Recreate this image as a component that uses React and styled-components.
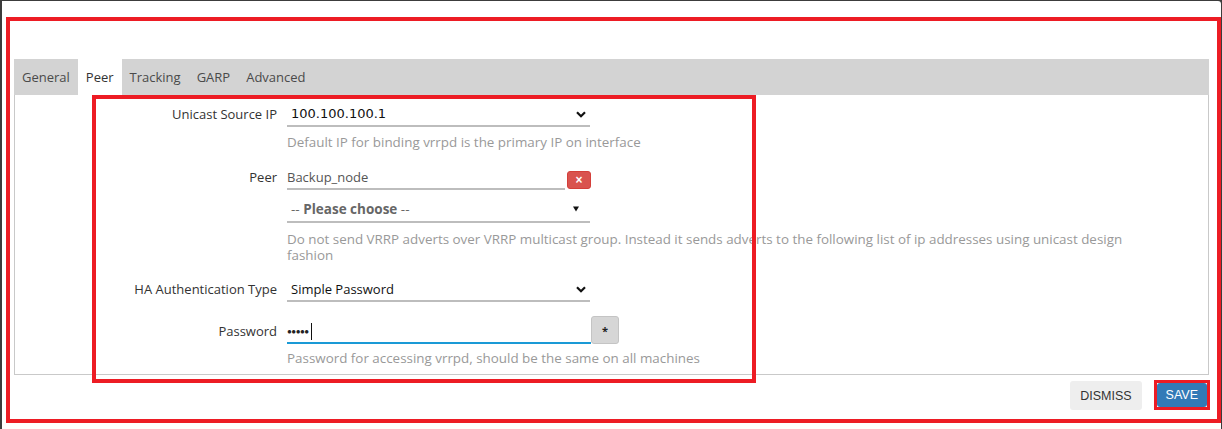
import React from "react";
import styled, { createGlobalStyle } from "styled-components";

const GlobalStyle = createGlobalStyle`
  html, body {
    margin: 0;
    padding: 0;
    background: #3c3c3c;
    overflow: hidden;
  }
  body {
    font-family: "Open Sans", "Noto Sans", sans-serif;
  }
`;

const Modal = styled.div`
  width: 1219px;
  height: 440px;
  margin: 1px 0 0 2px;
  background: #fff;
  border-radius: 0 3px 0 0;
  padding-top: 16px;
  box-sizing: border-box;
`;

/* red annotation frame around the whole dialog body */
const Frame = styled.div`
  width: 1215px;
  height: 406px;
  margin-left: 4px;
  border: 4px solid #ed1c24;
  box-sizing: border-box;
  padding: 38px 8px 0 4px;
  display: flex;
  flex-direction: column;
`;

const Panel = styled.div`
  position: relative;
  display: flex;
  flex-direction: column;
`;

const TabBar = styled.div`
  display: flex;
  height: 36px;
  background: #d3d3d3;
`;

const Tab = styled.div`
  padding: 0 8px;
  line-height: 36px;
  font-size: 13px;
  color: ${(p) => (p.$active ? "#333" : "#4a4a4a")};
  background: ${(p) => (p.$active ? "#fff" : "transparent")};
`;

const Body = styled.div`
  border: 1px solid #c9c9c9;
  border-top: none;
  padding: 4px 0 8px;
`;

const Row = styled.div`
  display: grid;
  grid-template-columns: 262px 1fr;
  column-gap: 10px;
  margin-top: ${(p) => p.$mt || 0}px;
`;

const Label = styled.div`
  text-align: right;
  font-size: 13px;
  color: #333;
  padding-top: ${(p) => p.$pt ?? 4}px;
  line-height: 22px;
  white-space: nowrap;
`;

const Field = styled.div`
  grid-column: 2;
  display: flex;
  flex-direction: column;
`;

const Line = styled.div`
  display: flex;
  align-items: flex-start;
  gap: ${(p) => p.$gap ?? 0}px;
  margin-top: ${(p) => p.$mt || 0}px;
`;

const Select = styled.div`
  width: ${(p) => p.$w || 303}px;
  height: 28px;
  box-sizing: border-box;
  padding: ${(p) => p.$pt ?? 4}px 4px 0 4px;
  line-height: 22px;
  border-bottom: 2px solid #bdbdbd;
  display: flex;
  align-items: center;
  justify-content: space-between;
  font-size: 13px;
  color: #111;
  font-family: ${(p) => (p.$mono ? '"DejaVu Sans", sans-serif' : "inherit")};
`;

const Placeholder = styled.span`
  font-weight: 700;
  font-size: 13.5px;
  color: #666;
  span {
    font-weight: 400;
  }
`;

const Input = styled.div`
  width: ${(p) => p.$w}px;
  height: 28px;
  box-sizing: border-box;
  padding-top: 4px;
  line-height: 22px;
  border-bottom: 2px solid ${(p) => (p.$focus ? "#1a9ad6" : "#bdbdbd")};
  font-size: 13px;
  color: #555;
  display: flex;
  align-items: center;
`;

const Dots = styled.span`
  font-size: 8px;
  letter-spacing: -0.5px;
  color: #222;
`;

const Caret = styled.span`
  display: inline-block;
  width: 1px;
  height: 17px;
  background: #111;
  margin-left: 2px;
`;

const RemoveBtn = styled.div`
  width: 24px;
  height: 18px;
  margin-top: 9px;
  border-radius: 3px;
  background: #d9534f;
  border: 1px solid #d43f3a;
  box-sizing: border-box;
  color: #fff;
  font-size: 12px;
  font-weight: 700;
  display: flex;
  align-items: center;
  justify-content: center;
  font-family: "Liberation Sans", Arial, sans-serif;
`;

const AddonBtn = styled.div`
  width: 28px;
  height: 28px;
  box-sizing: border-box;
  border-radius: 3px;
  background: #d6d6d6;
  border: 1px solid #c4c4c4;
  display: flex;
  align-items: center;
  justify-content: center;
  font-size: 11px;
  font-weight: 700;
  color: #222;
`;

const Help = styled.div`
  margin-top: ${(p) => p.$mt || 0}px;
  max-width: 850px;
  font-size: 13.4px;
  line-height: 16px;
  color: #999;
`;

/* red annotation box over the form */
const FormMark = styled.div`
  position: absolute;
  left: 78px;
  top: 36px;
  width: 664px;
  height: 288px;
  border: 4px solid #ed1c24;
  box-sizing: border-box;
  pointer-events: none;
`;

const Footer = styled.div`
  display: flex;
  justify-content: flex-end;
  align-items: flex-start;
  gap: 12px;
  margin: 5px -1px 0 0;
  font-family: "Liberation Sans", Arial, sans-serif;
`;

const Button = styled.button`
  height: ${(p) => (p.$primary ? 24 : 29)}px;
  margin-top: ${(p) => (p.$primary ? 0 : 1)}px;
  padding: 0 ${(p) => (p.$primary ? 9 : 10)}px;
  border: none;
  border-radius: 3px;
  font-family: inherit;
  font-size: 12.5px;
  background: ${(p) => (p.$primary ? "#337ab7" : "#eee")};
  color: ${(p) => (p.$primary ? "#fff" : "#333")};
`;

const SaveMark = styled.div`
  border: 3px solid #ed1c24;
  display: flex;
`;

const Chevron = () => (
  <svg width="10" height="7" viewBox="0 0 10 7">
    <path d="M1 1.2 L5 5.2 L9 1.2" fill="none" stroke="#111" strokeWidth="2.2" />
  </svg>
);

const Triangle = () => (
  <svg width="8" height="6" viewBox="0 0 8 6" style={{ marginRight: 6 }}>
    <path d="M1 0.5 L7 0.5 L4 5.5 Z" fill="#111" />
  </svg>
);

const App = () => {
  const tabs = ["General", "Peer", "Tracking", "GARP", "Advanced"];
  return (
    <>
      <GlobalStyle />
      <Modal>
        <Frame>
          <Panel>
            <TabBar>
              {tabs.map((t) => (
                <Tab key={t} $active={t === "Peer"}>
                  {t}
                </Tab>
              ))}
            </TabBar>
            <Body>
              <Row>
                <Label>Unicast Source IP</Label>
                <Field>
                  <Select $mono>
                    <span>100.100.100.1</span>
                    <Chevron />
                  </Select>
                  <Help $mt={7}>Default IP for binding vrrpd is the primary IP on interface</Help>
                </Field>
              </Row>
              <Row $mt={12}>
                <Label>Peer</Label>
                <Field>
                  <Line $gap={2}>
                    <Input $w={278}>Backup_node</Input>
                    <RemoveBtn>×</RemoveBtn>
                  </Line>
                  <Line $mt={5}>
                    <Select $pt={2}>
                      <Placeholder>
                        <span>-- </span>Please choose<span> --</span>
                      </Placeholder>
                      <Triangle />
                    </Select>
                  </Line>
                  <Help $mt={8}>
                    Do not send VRRP adverts over VRRP multicast group. Instead it sends adverts to the
                    following list of ip addresses using unicast design fashion
                  </Help>
                </Field>
              </Row>
              <Row $mt={11}>
                <Label>HA Authentication Type</Label>
                <Field>
                  <Select>
                    <span>Simple Password</span>
                    <Chevron />
                  </Select>
                </Field>
              </Row>
              <Row $mt={14}>
                <Label>Password</Label>
                <Field>
                  <Line>
                    <Input $w={304} $focus>
                      <Dots>●●●●●</Dots>
                      <Caret />
                    </Input>
                    <AddonBtn>*</AddonBtn>
                  </Line>
                  <Help $mt={6}>Password for accessing vrrpd, should be the same on all machines</Help>
                </Field>
              </Row>
            </Body>
            <FormMark />
          </Panel>
          <Footer>
            <Button>DISMISS</Button>
            <SaveMark>
              <Button $primary>SAVE</Button>
            </SaveMark>
          </Footer>
        </Frame>
      </Modal>
    </>
  );
};

export default App;
